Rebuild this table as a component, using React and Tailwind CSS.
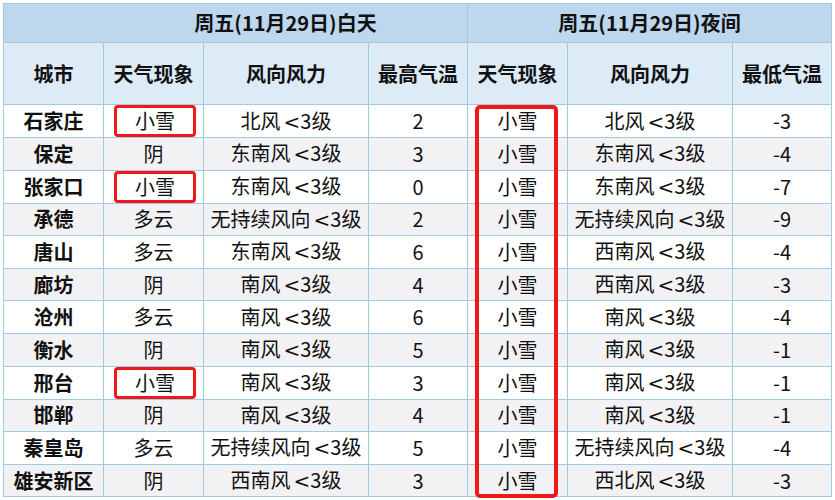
import React from "react";

const rows = [
  ["石家庄", "小雪", "北风<3级", "2", "小雪", "北风<3级", "-3", true],
  ["保定", "阴", "东南风<3级", "3", "小雪", "东南风<3级", "-4", false],
  ["张家口", "小雪", "东南风<3级", "0", "小雪", "东南风<3级", "-7", true],
  ["承德", "多云", "无持续风向<3级", "2", "小雪", "无持续风向<3级", "-9", false],
  ["唐山", "多云", "东南风<3级", "6", "小雪", "西南风<3级", "-4", false],
  ["廊坊", "阴", "南风<3级", "4", "小雪", "西南风<3级", "-3", false],
  ["沧州", "多云", "南风<3级", "6", "小雪", "南风<3级", "-4", false],
  ["衡水", "阴", "南风<3级", "5", "小雪", "南风<3级", "-1", false],
  ["邢台", "小雪", "南风<3级", "3", "小雪", "南风<3级", "-1", true],
  ["邯郸", "阴", "南风<3级", "4", "小雪", "南风<3级", "-1", false],
  ["秦皇岛", "多云", "无持续风向<3级", "5", "小雪", "无持续风向<3级", "-4", false],
  ["雄安新区", "阴", "西南风<3级", "3", "小雪", "西北风<3级", "-3", false],
];

const cell = "border border-[#a3c8e2] text-center p-0 whitespace-nowrap";

function Wind({ text }) {
  const [a, b] = text.split("<");
  return (
    <>
      {a}
      <span className="ml-[3px] font-['DejaVu_Sans']">&lt;</span>
      {b}
    </>
  );
}

export default function App() {
  return (
    <div
      className="relative w-[835px] h-[500px] bg-white overflow-hidden text-[#111]"
      style={{ fontFamily: '"Noto Sans CJK SC", "Noto Sans", sans-serif' }}
    >
      <div className="pt-[3px] pl-[3px]">
        <table className="border-collapse table-fixed text-[20px] leading-none">
          <colgroup>
            <col className="w-[100px]" />
            <col className="w-[100px]" />
            <col className="w-[165px]" />
            <col className="w-[99px]" />
            <col className="w-[100px]" />
            <col className="w-[165px]" />
            <col className="w-[99px]" />
          </colgroup>
          <thead>
            <tr className="h-[39px] bg-[#bdd7ee] font-bold">
              <th colSpan={4} className={`${cell} border-[#9dc3e6] pl-[100px]`}>
                周五(11月29日)白天
              </th>
              <th colSpan={3} className={`${cell} border-[#9dc3e6]`}>
                周五(11月29日)夜间
              </th>
            </tr>
            <tr className="h-[62px] bg-[#ddebf7] font-bold">
              {["城市", "天气现象", "风向风力", "最高气温", "天气现象", "风向风力", "最低气温"].map(
                (h, i) => (
                  <th key={i} className={`${cell} border-[#9dc3e6]`}>
                    {h}
                  </th>
                )
              )}
            </tr>
          </thead>
          <tbody>
            {rows.map((r, i) => (
              <tr key={i} className={`h-[32.6px] ${i % 2 === 1 ? "bg-[#f2f2f4]" : "bg-white"}`}>
                <td className={`${cell} font-bold`}>{r[0]}</td>
                <td className={cell}>
                  {r[7] ? (
                    <div className="ml-[10px] mr-[7px] h-[32px] flex items-center justify-center border-[3px] border-[#f01818] rounded-[4px] bg-white">
                      {r[1]}
                    </div>
                  ) : (
                    r[1]
                  )}
                </td>
                <td className={cell}>
                  <Wind text={r[2]} />
                </td>
                <td className={cell}>{r[3]}</td>
                <td className={cell}>{r[4]}</td>
                <td className={cell}>
                  <Wind text={r[5]} />
                </td>
                <td className={cell}>{r[6]}</td>
              </tr>
            ))}
          </tbody>
        </table>
      </div>
      <div className="absolute left-[475px] top-[105px] w-[83px] h-[393px] border-[4px] border-[#f01818] rounded-[5px] pointer-events-none" />
    </div>
  );
}
